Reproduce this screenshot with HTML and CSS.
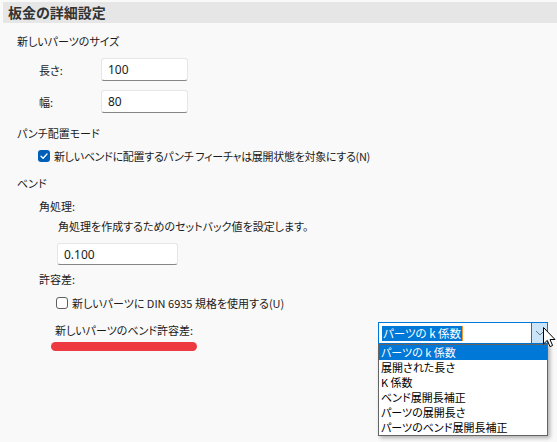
FILE: index.html
```html
<!DOCTYPE html>
<html lang="ja">
<head>
<meta charset="utf-8">
<title>板金の詳細設定</title>
<link rel="stylesheet" href="styles.css">
</head>
<body>
<div class="panel">
  <div class="header">板金の詳細設定</div>

  <div class="line l1 ind1">新しいパーツのサイズ</div>
  <div class="field f1">
    <span class="flabel">長さ:</span>
    <span class="input w87">100</span>
  </div>
  <div class="field f2">
    <span class="flabel">幅:</span>
    <span class="input w87">80</span>
  </div>

  <div class="line l2 ind1">パンチ配置モード</div>
  <div class="line l3 ind-cb1">
    <span class="cb checked"><svg width="12" height="12" viewBox="0 0 12 12"><path d="M3 6.2 L5.1 8.2 L9 4" fill="none" stroke="#fff" stroke-width="1.3" stroke-linecap="round" stroke-linejoin="round"/></svg></span>
    <span class="tight">新しいベンドに配置するパンチ フィーチャは展開状態を対象にする(N)</span>
  </div>

  <div class="line l4 ind1">ベンド</div>
  <div class="line l5 ind2">角処理:</div>
  <div class="line l6 ind3">角処理を作成するためのセットバック値を設定します。</div>
  <div class="inrow">
    <span class="input w121">0.100</span>
  </div>
  <div class="line l7 ind2">許容差:</div>
  <div class="line l8 ind-cb2">
    <span class="cb"></span>
    <span>新しいパーツに DIN 6935 規格を使用する(U)</span>
  </div>

  <div class="tolrow">
    <span class="tollabel">新しいパーツのベンド許容差:</span>
    <span class="redmark"></span>
    <div class="combo">
      <span class="cvalue"><span class="sel">パーツの k 係数</span><span class="caret"></span></span>
      <span class="cbtn"><svg width="10" height="6" viewBox="0 0 10 6"><path d="M1 1 L5 5 L9 1" fill="none" stroke="#6d7885" stroke-width="1"/></svg></span>
      <ul class="list">
        <li class="hi">パーツの k 係数</li>
        <li>展開された長さ</li>
        <li>K 係数</li>
        <li>ベンド展開長補正</li>
        <li>パーツの展開長さ</li>
        <li>パーツのベンド展開長補正</li>
      </ul>
      <svg class="cursor" width="13" height="21" viewBox="0 0 13 21"><path d="M0.5 0.5 L0.5 17 L4.3 13.4 L7 19.6 L9.6 18.5 L7 12.5 L12 12.5 Z" fill="#fff" stroke="#000" stroke-width="1" stroke-linejoin="miter"/></svg>
    </div>
  </div>
</div>
</body>
</html>
```

FILE: styles.css
```css
html, body {
  margin: 0;
  padding: 0;
  background: #f9f9f9;
}
body {
  width: 557px;
  height: 442px;
  overflow: hidden;
  font-family: "Noto Sans CJK JP", "Noto Sans", sans-serif;
  font-size: 11px;
  color: #1b1b1b;
  font-feature-settings: "palt";
}
.panel {
  padding-top: 2px;
}
.header {
  margin-left: 3px;
  height: 21px;
  line-height: 21px;
  background: #e6e6e6;
  padding-left: 5px;
  font-weight: bold;
  font-size: 14px;
  color: #333;
}
.line {
  height: 18px;
  line-height: 18px;
  display: flex;
  align-items: center;
  white-space: nowrap;
}
.tight { letter-spacing: -0.3px; }
.ind1 { padding-left: 17px; }
.ind2 { padding-left: 39px; }
.ind3 { padding-left: 58px; }
.ind-cb1 { padding-left: 38px; }
.ind-cb2 { padding-left: 56px; }
.l1 { margin-top: 9px; }
.l2 { margin-top: 11px; }
.l3 { margin-top: 5px; }
.l4 { margin-top: 9px; }
.l5 { margin-top: 5px; }
.l6 { margin-top: 2px; }
.l7 { margin-top: 5px; }
.l8 { margin-top: 6px; }

.field {
  display: flex;
  align-items: center;
  padding-left: 39px;
  height: 23px;
}
.f1 { margin-top: 8px; }
.f2 { margin-top: 9px; }
.flabel {
  width: 62px;
}
.input {
  box-sizing: border-box;
  display: flex;
  align-items: center;
  height: 23px;
  padding-left: 6px;
  background: #fff;
  border: 1px solid #e6e6e6;
  border-bottom: 1px solid #868686;
  border-radius: 3px;
  font-family: "Noto Sans", sans-serif;
  font-size: 12px;
  color: #1b1b1b;
}
.w87 { width: 87px; }
.w121 { width: 121px; height: 22px; }
.inrow {
  margin-top: 8px;
  padding-left: 57px;
  height: 22px;
}

.cb {
  box-sizing: border-box;
  width: 12px;
  height: 12px;
  border: 1px solid #5f5f5f;
  border-radius: 3px;
  background: #fff;
  margin-right: 4px;
  display: inline-block;
  flex: none;
}
.cb.checked {
  border: none;
  background: #005fb8;
}
.cb svg { display: block; }

.tolrow {
  position: relative;
  margin-top: 9px;
  height: 23px;
  display: flex;
  align-items: flex-start;
  padding-left: 55px;
  padding-right: 9px;
}
.tollabel {
  height: 18px;
  line-height: 18px;
  white-space: nowrap;
}
.redmark {
  position: absolute;
  left: 51px;
  top: 21px;
  width: 146px;
  height: 9px;
  border-radius: 5px;
  background: #ec3a40;
}
.combo {
  position: relative;
  margin-left: auto;
  margin-top: 1px;
  box-sizing: border-box;
  width: 170px;
  height: 22px;
  border: 1px solid #0078d7;
  background: #fff;
  display: flex;
}
.cvalue {
  flex: 1;
  display: flex;
  align-items: center;
  padding-left: 3px;
}
.sel {
  background: #0078d7;
  color: #fff;
  height: 15px;
  line-height: 15px;
  padding: 0 1px;
  font-size: 11.5px;
}
.caret {
  width: 1px;
  height: 15px;
  background: #f0962e;
}
.cbtn {
  box-sizing: border-box;
  width: 16px;
  background: #cce4f7;
  border-left: 1px solid #0078d7;
  display: flex;
  align-items: center;
  justify-content: center;
}
.list {
  position: absolute;
  left: -1px;
  top: 21px;
  width: 170px;
  box-sizing: border-box;
  margin: 0;
  padding: 0;
  list-style: none;
  background: #fff;
  border: 1px solid #646464;
  box-shadow: 2px 2px 4px rgba(0, 0, 0, 0.3);
}
.list li {
  height: 15px;
  line-height: 15px;
  padding-left: 2px;
  white-space: nowrap;
  color: #000;
  font-size: 11px;
}
.list li.hi {
  background: #0078d7;
  color: #fff;
}
.cursor {
  position: absolute;
  left: 164px;
  top: 4px;
}
```
